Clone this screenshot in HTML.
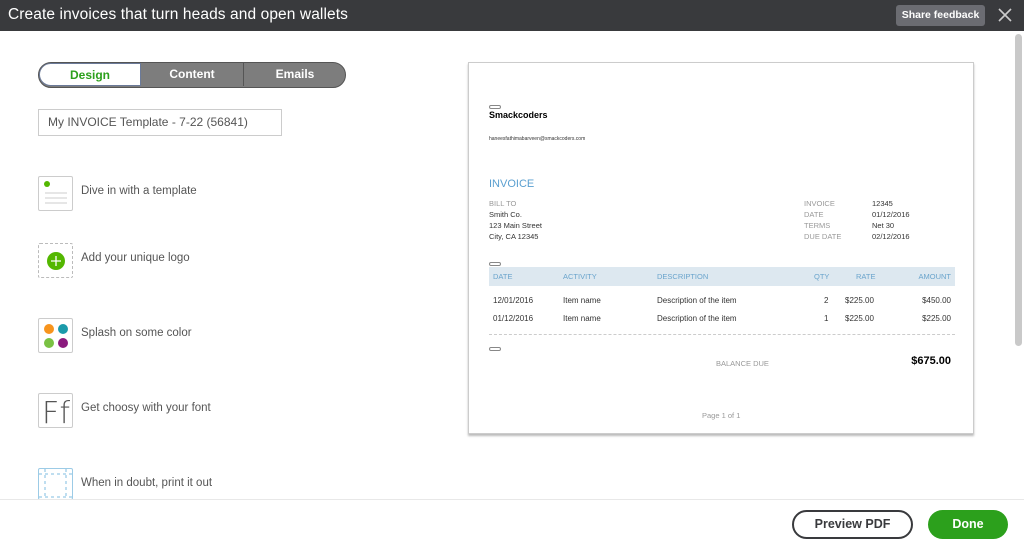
<!DOCTYPE html>
<html><head><meta charset="utf-8"><style>
*{box-sizing:border-box;margin:0;padding:0}
body{width:1024px;height:542px;overflow:hidden;background:#fff;font-family:"Liberation Sans",sans-serif;color:#393a3d;position:relative}
.hdr{position:absolute;left:0;top:0;width:1024px;height:31px;background:#393a3d}
.hdr h1{position:absolute;left:8px;top:6px;font-size:15.5px;font-weight:normal;color:#fff;letter-spacing:.1px}
.fb{position:absolute;left:896px;top:5px;width:89px;height:21px;background:#6b6c72;border-radius:3px;color:#fff;font-size:10.5px;font-weight:bold;text-align:center;line-height:21px}
.x{position:absolute;left:997px;top:7px}
.sb{position:absolute;left:1015px;top:34px;width:7px;height:312px;background:#c9c9c9;border-radius:4px}
.tabs{position:absolute;left:38px;top:62px;width:308px;height:26px;border:1.5px solid #555;border-radius:13px;background:#7d7d7d;overflow:hidden;font-size:12px;font-weight:bold;color:#fff}
.tabs div{position:absolute;top:0;height:23px;line-height:23px;text-align:center}
.t1{left:0;width:102px;background:#fff;color:#2ca01c;border-radius:12px 0 0 12px;border:1px solid #6b7a99}
.t2{left:102px;width:103px;border-right:1px solid #555}
.t3{left:205px;width:102px}
.inp{position:absolute;left:38px;top:109px;width:244px;height:27px;border:1px solid #ccc;font-size:12px;color:#555;padding-left:9px;line-height:25px}
.it{position:absolute;left:38px;width:35px;height:35px;border:1px solid #ccc;border-radius:2px;background:#fff}
.lbl{position:absolute;left:81px;font-size:11.5px;color:#555}
.paper{position:absolute;left:468px;top:62px;width:506px;height:372px;border:1px solid #ccc;box-shadow:0 2px 2px #bbb;font-size:7.5px;color:#333}
.paper .a{position:absolute}
.g{color:#999}
.pill{position:absolute;width:12px;height:4px;border:1px solid #888;border-radius:2px}
.foot{position:absolute;left:0;top:499px;width:1024px;height:1px;background:#e8e8e8}
.pp{position:absolute;left:792px;top:510px;width:121px;height:29px;border:2px solid #393a3d;border-radius:15px;font-size:12.5px;font-weight:bold;text-align:center;line-height:25px}
.dn{position:absolute;left:928px;top:510px;width:80px;height:29px;background:#2ca01c;border-radius:15px;font-size:12.5px;font-weight:bold;text-align:center;line-height:29px;color:#fff}
</style></head><body>
<div class="hdr"><h1>Create invoices that turn heads and open wallets</h1>
<div class="fb">Share feedback</div>
<svg class="x" width="16" height="16" viewBox="0 0 16 16"><path d="M2 2L14 14M14 2L2 14" stroke="#ccc" stroke-width="1.6"/></svg></div>
<div class="sb"></div>
<div class="tabs"><div class="t1">Design</div><div class="t2">Content</div><div class="t3">Emails</div></div>
<div class="inp">My INVOICE Template - 7-22 (56841)</div>

<div class="it" style="top:176px"><svg width="33" height="33"><circle cx="8" cy="7" r="3" fill="#53b700"/><path d="M6 16h22M6 21h22M6 26h22" stroke="#ccc"/></svg></div>
<div class="lbl" style="top:185px">Dive in with a template</div>
<div class="it" style="top:243px;border:1px dashed #bbb"><svg width="33" height="33"><circle cx="17" cy="17" r="9" fill="#53b700"/><path d="M17 12v10M12 17h10" stroke="#fff" stroke-width="1.3"/></svg></div>
<div class="lbl" style="top:252px">Add your unique logo</div>
<div class="it" style="top:318px"><svg width="33" height="33"><circle cx="10" cy="10" r="5" fill="#f7941d"/><circle cx="24" cy="10" r="5" fill="#1b9aaa"/><circle cx="10" cy="24" r="5" fill="#7ac143"/><circle cx="24" cy="24" r="5" fill="#8b1a7e"/></svg></div>
<div class="lbl" style="top:327px">Splash on some color</div>
<div class="it" style="top:393px"><svg width="33" height="33"><text x="3" y="29" font-family="DejaVu Sans" font-size="30" font-weight="200" fill="#555" textLength="28">Ff</text></svg></div>
<div class="lbl" style="top:402px">Get choosy with your font</div>
<div class="it" style="top:468px;height:32px;border:1px solid #9ccbe6"><svg width="33" height="31"><path d="M0 5h33M6 0v31M27 0v31M0 28h33" stroke="#7fbde0" stroke-dasharray="3 3"/></svg></div>
<div class="lbl" style="top:477px">When in doubt, print it out</div>

<div class="paper">
<div class="pill" style="left:20px;top:42px"></div>
<div class="a" style="left:20px;top:47px;font-size:9px;font-weight:bold;color:#000">Smackcoders</div>
<div class="a" style="left:20px;top:73px;font-size:5px">haneesfathimabarveen@smackcoders.com</div>
<div class="a" style="left:20px;top:115px;font-size:11px;color:#5a9fd0">INVOICE</div>
<div class="a g" style="left:20px;top:135px;line-height:11px">BILL TO</div>
<div class="a" style="left:20px;top:146px;line-height:11px">Smith Co.<br>123 Main Street<br>City, CA 12345</div>
<div class="a g" style="left:335px;top:135px;line-height:11px">INVOICE<br>DATE<br>TERMS<br>DUE DATE</div>
<div class="a" style="left:403px;top:135px;line-height:11px">12345<br>01/12/2016<br>Net 30<br>02/12/2016</div>
<div class="pill" style="left:20px;top:199px"></div>
<div class="a" style="left:20px;top:204px;width:466px;height:19px;background:#dde8f0;color:#6aa4cc;line-height:19px">
<span class="a" style="left:4px">DATE</span><span class="a" style="left:74px">ACTIVITY</span><span class="a" style="left:168px">DESCRIPTION</span><span class="a" style="left:325px">QTY</span><span class="a" style="left:367px">RATE</span><span class="a" style="right:4px">AMOUNT</span></div>
<div class="a" style="left:24px;top:229px;line-height:18px;font-size:8px">12/01/2016<br>01/12/2016</div>
<div class="a" style="left:94px;top:229px;line-height:18px;font-size:8px">Item name<br>Item name</div>
<div class="a" style="left:188px;top:229px;line-height:18px;font-size:8px">Description of the item<br>Description of the item</div>
<div class="a" style="left:355px;top:229px;line-height:18px;font-size:8px">2<br>1</div>
<div class="a" style="left:376px;top:229px;line-height:18px;font-size:8px">$225.00<br>$225.00</div>
<div class="a" style="right:22px;top:229px;line-height:18px;font-size:8px;text-align:right">$450.00<br>$225.00</div>
<div class="a" style="left:20px;top:271px;width:466px;border-top:1px dashed #ccc"></div>
<div class="pill" style="left:20px;top:284px"></div>
<div class="a g" style="left:247px;top:296px">BALANCE DUE</div>
<div class="a" style="right:22px;top:292px;font-size:11px;font-weight:bold;color:#000">$675.00</div>
<div class="a g" style="left:233px;top:348px">Page 1 of 1</div>
</div>

<div class="foot"></div>
<div class="pp">Preview PDF</div>
<div class="dn">Done</div>
</body></html>
